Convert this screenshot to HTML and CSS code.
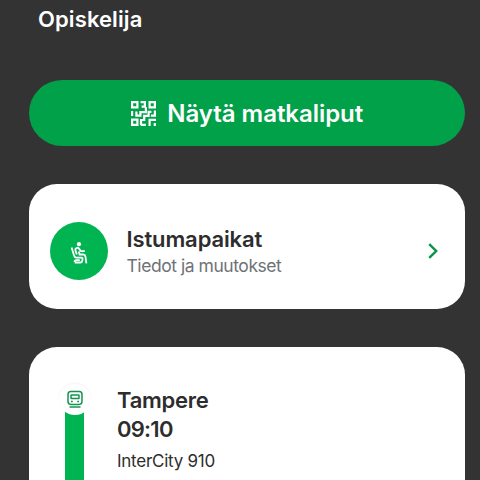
FILE: index.html
```html
<!DOCTYPE html>
<html lang="fi">
<head>
<meta charset="utf-8">
<title>Matka</title>
<link rel="stylesheet" href="styles.css">
</head>
<body>
<main class="screen">
  <h1 class="passenger"><span>Opiskelija</span></h1>
  <button class="tickets">
    <svg class="qr" viewBox="0 0 25 25" fill="none" stroke="currentColor" stroke-width="2.2">
      <path d="M1.1 1.1h5.3v5.3H1.1zM18.6 1.1h5.3v5.3h-5.3zM1.1 18.6h5.3v5.3H1.1zM9.6 1.1h4.3v4.6h-3.3M14.9 6.2v5H9.4v3.4H5.4v-4M1.1 10v5M10 24V19h3.2v-4.2h4.4v-4h2.8M23.9 9.5v5.2h-4M9.7 23.9h5.2M18.6 25v-6.2H25M23.8 22v3"/>
    </svg>
    <span>Näytä matkaliput</span>
  </button>
  <section class="card seats">
    <div class="seat-badge">
      <svg class="seat" viewBox="0 0 20 24" fill="none" stroke="#fff" stroke-width="1.8">
        <circle cx="10" cy="3.2" r="2.1" fill="#fff" stroke="none"/>
        <path d="M2.6 6.5l2.6 8.4c.4 1.3 1.1 1.7 2.3 1.7h4.6c1.2 0 1.7.7 1.4 1.8l-.4 1.9c-.2.9-.8 1.2-1.6 1.2H5.7M5.6 21c0-1.1.6-1.8 1.7-1.8h3.5M7.8 13.5L6.3 9c-.5-1.6 2.4-3 3.5-1.6l2.1 2.8h3.9M9.8 10.5l.8 3h3.6c1.3 0 2 .6 2.2 1.8l1 7"/>
      </svg>
    </div>
    <div class="seat-text">
      <h2><span>Istumapaikat</span></h2>
      <p><span>Tiedot ja muutokset</span></p>
    </div>
    <svg class="chevron" viewBox="0 0 10 16" fill="none" stroke="#079447" stroke-width="2.4"><path d="M1.2 1.2L8.2 8l-7 6.8"/></svg>
  </section>
  <section class="card trip">
    <div class="line">
      <div class="stop">
        <svg class="train" viewBox="0 0 16 18" fill="none" stroke="#159451" stroke-width="1.5">
          <rect x="1" y="1.6" width="14" height="12.8" rx="2.8"/>
          <rect x="4" y="5" width="8" height="3.6" rx=".5"/>
          <path d="M4 11.4h1.8M10.2 11.4H12M2.5 17h11"/>
        </svg>
      </div>
    </div>
    <div class="departure">
      <h2><span class="city">Tampere</span></h2>
      <p class="time"><span>09:10</span></p>
      <p class="service"><span>InterCity 910</span></p>
    </div>
  </section>
</main>
</body>
</html>
```
FILE: styles.css
```css
* { box-sizing: border-box; }
body { margin: 0; background: #333; font-family: Inter, "Liberation Sans", sans-serif; color: #2d2d2d; }
h1, h2, p { margin: 0; }
.screen { height: 480px; overflow: hidden; padding: 4px 15.5px 0 29px; display: flex; flex-direction: column; }
.passenger { flex: none; height: 28px; margin: 0 0 48px 9px; color: #fff; font-size: 22px; line-height: 31px; font-weight: 600; letter-spacing: .1px; }
.tickets { flex: none; height: 66px; margin: 0 0 38px; padding: 2px 0 0 1px; border: 0; border-radius: 33px; background: #00a149; color: #fff; display: flex; align-items: center; justify-content: center; gap: 11px; font: 600 24px/30px Inter, "Liberation Sans", sans-serif; letter-spacing: -.05px; }
.qr { width: 25px; height: 25px; flex: none; margin-top: -2px; }
.card { flex: none; background: #fff; border-radius: 28px; }
.seats { height: 125px; margin-bottom: 38px; padding: 0 27px 0 21px; display: flex; align-items: center; }
.seat-badge { width: 58px; height: 58px; margin-top: 9px; border-radius: 50%; background: #00b451; display: flex; align-items: center; justify-content: center; }
.seat { width: 20px; height: 24px; margin-top: 3px; }
.seat-text { flex: 1; margin: 11px 0 0 18.5px; }
.seat-text h2 { font-size: 22px; line-height: 28px; font-weight: 600; letter-spacing: -.12px; }
.seat-text p { font-size: 17.5px; line-height: 26px; color: #707177; letter-spacing: -.45px; }
.chevron { width: 10px; height: 16px; margin-top: 9px; }
.trip { height: 160px; padding: 37px 30px 0; display: flex; }
.line { width: 32px; margin-right: 26px; background: linear-gradient(#00b451, #00b451) 6px 15px / 19px 200px no-repeat; }
.stop { width: 32px; height: 31px; border-radius: 50%; background: #fff; box-shadow: 0 -1px 2px #0000000d; display: flex; align-items: center; justify-content: center; }
.train { width: 16px; height: 18px; margin-top: -2px; }
.departure h2, .time { font-size: 22px; line-height: 29px; font-weight: 600; }
.departure h2 { letter-spacing: -.25px; }
.time { letter-spacing: -.75px; }
.departure { padding-top: 2px; }
.service { font-size: 17px; line-height: 24px; margin-top: 5px; letter-spacing: -.25px; }
```
